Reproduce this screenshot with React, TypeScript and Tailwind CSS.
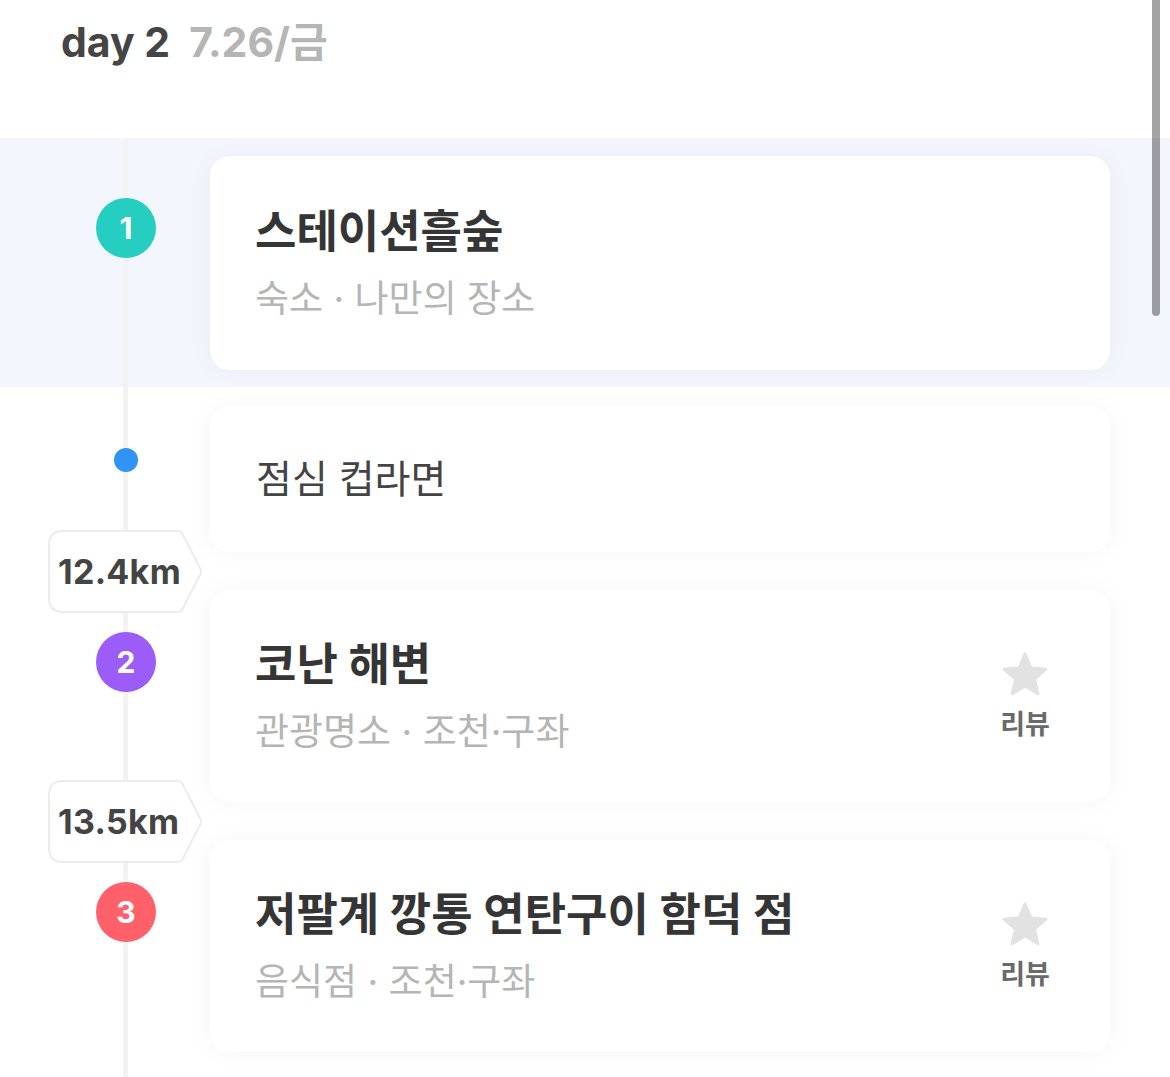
import React from "react";

const FONT = 'Inter, "Noto Sans CJK KR", sans-serif';

function Star() {
  return (
    <svg width="48" height="48" viewBox="0 0 48 48">
      <path
        d="M24 3 L29.88 16.91 L44.92 18.2 L33.51 28.09 L36.93 42.8 L24 35 L11.07 42.8 L14.49 28.09 L3.08 18.2 L18.12 16.91 Z"
        fill="#e2e2e2"
        stroke="#e2e2e2"
        strokeWidth="3"
        strokeLinejoin="round"
      />
    </svg>
  );
}

function Badge({ text }: { text: string }) {
  return (
    <div className="relative ml-[48px] h-[83px] w-[155px] shrink-0">
      <svg className="absolute inset-0" width="155" height="83" viewBox="0 0 155 83">
        <path
          d="M15 1 H130 Q133 1 134.5 4 L152.5 39 Q153.8 41.5 152.5 44 L134.5 79 Q133 82 130 82 H15 Q1 82 1 68 V15 Q1 1 15 1 Z"
          fill="#ffffff"
          stroke="#ececec"
          strokeWidth="2"
        />
      </svg>
      <div className="relative flex h-full items-center pl-[10px] text-[34px] font-bold tracking-[0.3px] text-[#444444]">
        {text}
      </div>
    </div>
  );
}

function Circle({ n, color }: { n: string; color: string }) {
  return (
    <div className="w-[210px] shrink-0 pl-[96px] pt-[42px]">
      <div
        className={`relative flex h-[60px] w-[60px] items-center justify-center rounded-full text-[30px] font-bold text-white ${color}`}
      >
        {n}
      </div>
    </div>
  );
}

function PlaceCard({
  title,
  sub,
  review,
  tall,
}: {
  title: string;
  sub: string;
  review?: boolean;
  tall?: boolean;
}) {
  return (
    <div
      className={`flex w-[900px] items-center rounded-[20px] bg-white pl-[45px] pr-[59px] shadow-[0_0_24px_rgba(0,0,0,0.045)] ${
        tall ? "py-[47px]" : "py-[46px]"
      }`}
    >
      <div className="flex flex-1 flex-col">
        <div className="text-[45px] font-bold leading-[58px] text-[#353535]">{title}</div>
        <div className="mt-[13px] text-[37px] leading-[49px] text-[#b5b5b5]">{sub}</div>
      </div>
      {review && (
        <div className="flex w-[52px] flex-col items-center">
          <Star />
          <div className="mt-[10px] text-[27px] font-semibold leading-[32px] text-[#6a6a6a]">리뷰</div>
        </div>
      )}
    </div>
  );
}

export default function App() {
  return (
    <div className="relative min-h-[1077px] w-full overflow-hidden bg-white" style={{ fontFamily: FONT }}>
      {/* header */}
      <div className="flex h-[138px] items-start pl-[61px] pt-[17px]">
        <span className="text-[41px] font-bold leading-[50px] text-[#454545]">day 2</span>
        <span className="ml-[19px] text-[41px] font-bold leading-[50px] text-[#b5b5b5]">7.26/금</span>
      </div>

      {/* list */}
      <div className="relative">
        <div className="absolute bottom-0 left-[123px] top-0 w-[5px] bg-[#f3f3f3]" />

        {/* highlighted band */}
        <div className="flex bg-[#f3f6fd] pb-[17px] pt-[18px]">
          <Circle n="1" color="bg-[#26cdc1]" />
          <PlaceCard title="스테이션흘숲" sub="숙소 · 나만의 장소" tall />
        </div>

        {/* memo row */}
        <div className="mt-[19px] flex">
          <div className="w-[210px] shrink-0 pl-[114px] pt-[42px]">
            <div className="relative h-[24px] w-[24px] rounded-full bg-[#2f94f6]" />
          </div>
          <div className="flex w-[900px] items-center rounded-[20px] bg-white py-[47px] pl-[46px] shadow-[0_0_24px_rgba(0,0,0,0.045)]">
            <div className="text-[39px] leading-[52px] text-[#444444]">점심 컵라면</div>
          </div>
        </div>

        <div className="flex h-[38px] items-center">
          <Badge text="12.4km" />
        </div>

        <div className="flex">
          <Circle n="2" color="bg-[#9c5cf7]" />
          <PlaceCard title="코난 해변" sub="관광명소 · 조천·구좌" review />
        </div>

        <div className="flex h-[38px] items-center">
          <Badge text="13.5km" />
        </div>

        <div className="flex pb-[40px]">
          <Circle n="3" color="bg-[#fe616a]" />
          <PlaceCard title="저팔계 깡통 연탄구이 함덕 점" sub="음식점 · 조천·구좌" review />
        </div>
      </div>

      {/* overlay scrollbar */}
      <div className="absolute right-[10px] top-[-10px] h-[326px] w-[8px] rounded-full bg-[rgba(0,0,0,0.36)]" />
    </div>
  );
}
